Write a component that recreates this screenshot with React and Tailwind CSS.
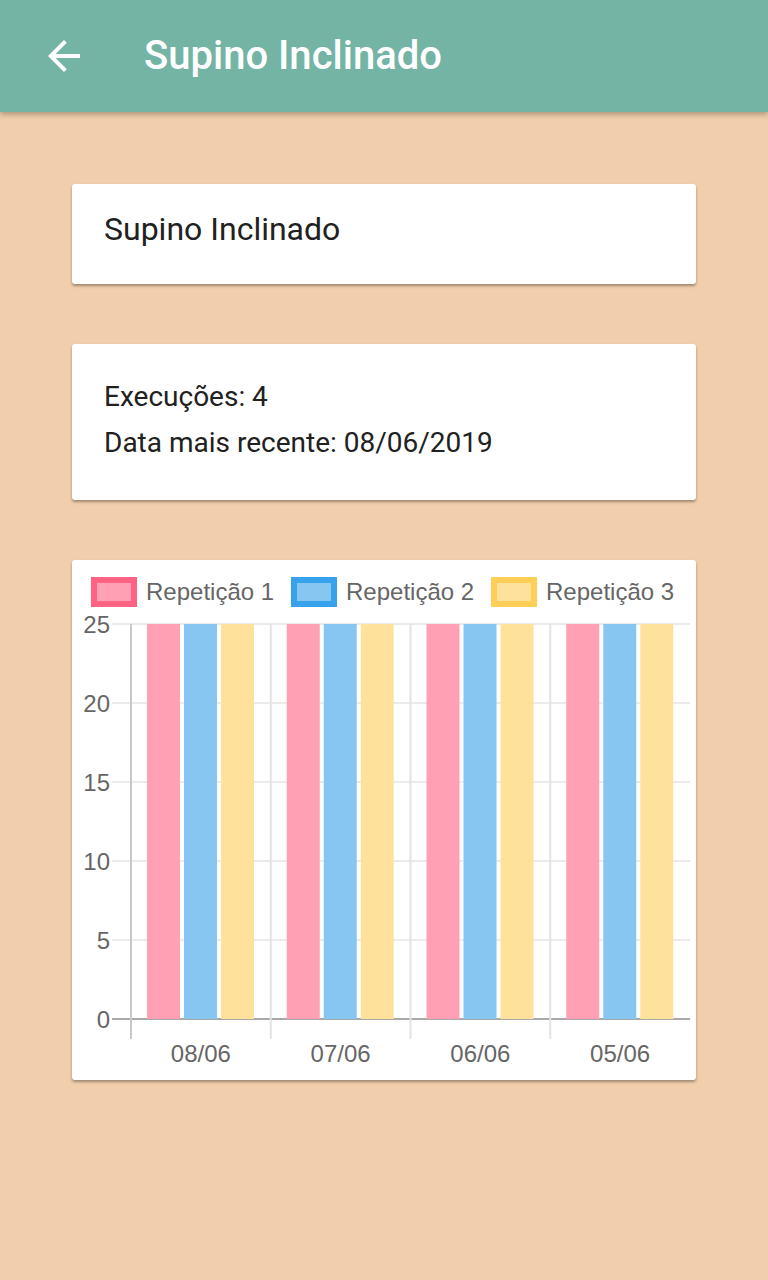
const series = [
  { label: "Repetição 1", border: "#ff6384", fill: "#ffa0b4" },
  { label: "Repetição 2", border: "#36a2eb", fill: "#88c6f2" },
  { label: "Repetição 3", border: "#ffce56", fill: "#fee29c" },
];

const dates = ["08/06", "07/06", "06/06", "05/06"];
const ticks = [25, 20, 15, 10, 5, 0];

const BackIcon = () => (
  <svg width="48" height="48" viewBox="0 0 24 24" fill="currentColor">
    <path d="M20 11H7.83l5.59-5.59L12 4l-8 8 8 8 1.41-1.41L7.83 13H20v-2z" />
  </svg>
);

const Chart = () => {
  const left = 59;
  const step = 139.75;
  const top = 64;
  const bottom = 459;
  const rowH = (bottom - top) / 5;

  return (
    <svg width="624" height="520" className="block" style={{ fontFamily: '"Liberation Sans", Arial, sans-serif' }}>
      {/* Legend */}
      {series.map((s, i) => (
        <g key={s.label}>
          <rect x={22 + i * 200} y={20} width={40} height={24} fill={s.fill} stroke={s.border} strokeWidth={6} />
          <text x={74 + i * 200} y={40} fontSize={24} fill="#666">
            {s.label}
          </text>
        </g>
      ))}

      {/* Horizontal grid */}
      {ticks.map((t, i) => {
        const y = top + i * rowH;
        return (
          <g key={t}>
            <line x1={40} x2={618} y1={y} y2={y} stroke={t === 0 ? "#a9a9a9" : "#e5e5e5"} strokeWidth={t === 0 ? 2 : 1.5} />
            <text x={38} y={y + 8.5} fontSize={24} fill="#666" textAnchor="end">
              {t}
            </text>
          </g>
        );
      })}

      {/* Vertical grid */}
      {dates.map((d, i) => (
        <line
          key={d}
          x1={left + i * step}
          x2={left + i * step}
          y1={top}
          y2={479}
          stroke={i === 0 ? "#c8c8c8" : "#e3e3e3"}
          strokeWidth={2}
        />
      ))}

      {/* Bars */}
      {dates.map((d, i) =>
        series.map((s, j) => (
          <rect key={d + j} x={left + i * step + 16 + j * 37} y={top} width={33} height={bottom - top} fill={s.fill} />
        ))
      )}

      {/* X labels */}
      {dates.map((d, i) => (
        <text key={d} x={left + i * step + step / 2} y={502} fontSize={24} fill="#666" textAnchor="middle">
          {d}
        </text>
      ))}
    </svg>
  );
};

export default function App() {
  return (
    <div className="min-h-[1280px] w-full bg-[#f2cfac] font-['Roboto',sans-serif]">
      {/* App bar */}
      <header className="h-[112px] bg-[#73b4a5] flex items-center shadow-[0_3px_5px_rgba(0,0,0,0.25)] relative">
        <div className="w-[48px] h-[48px] ml-[40px] flex items-center justify-center text-white">
          <BackIcon />
        </div>
        <h1 className="ml-[56px] text-[40px] leading-[48px] font-medium text-white">Supino Inclinado</h1>
      </header>

      <main className="px-[72px] pt-[72px] flex flex-col gap-[60px]">
        <section className="bg-white rounded-[3px] shadow-[0_2px_3px_rgba(0,0,0,0.35)] px-[32px] pt-[21px] pb-[31px]">
          <p className="text-[32px] leading-[48px] text-[#212121]">Supino Inclinado</p>
        </section>

        <section className="bg-white rounded-[3px] shadow-[0_2px_3px_rgba(0,0,0,0.35)] px-[32px] pt-[30px] pb-[34px]">
          <p className="text-[28px] leading-[46px] text-[#212121]">Execuções: 4</p>
          <p className="text-[28px] leading-[46px] text-[#212121]">Data mais recente: 08/06/2019</p>
        </section>

        <section className="bg-white rounded-[3px] shadow-[0_2px_3px_rgba(0,0,0,0.35)] h-[520px] overflow-hidden">
          <Chart />
        </section>
      </main>
    </div>
  );
}
